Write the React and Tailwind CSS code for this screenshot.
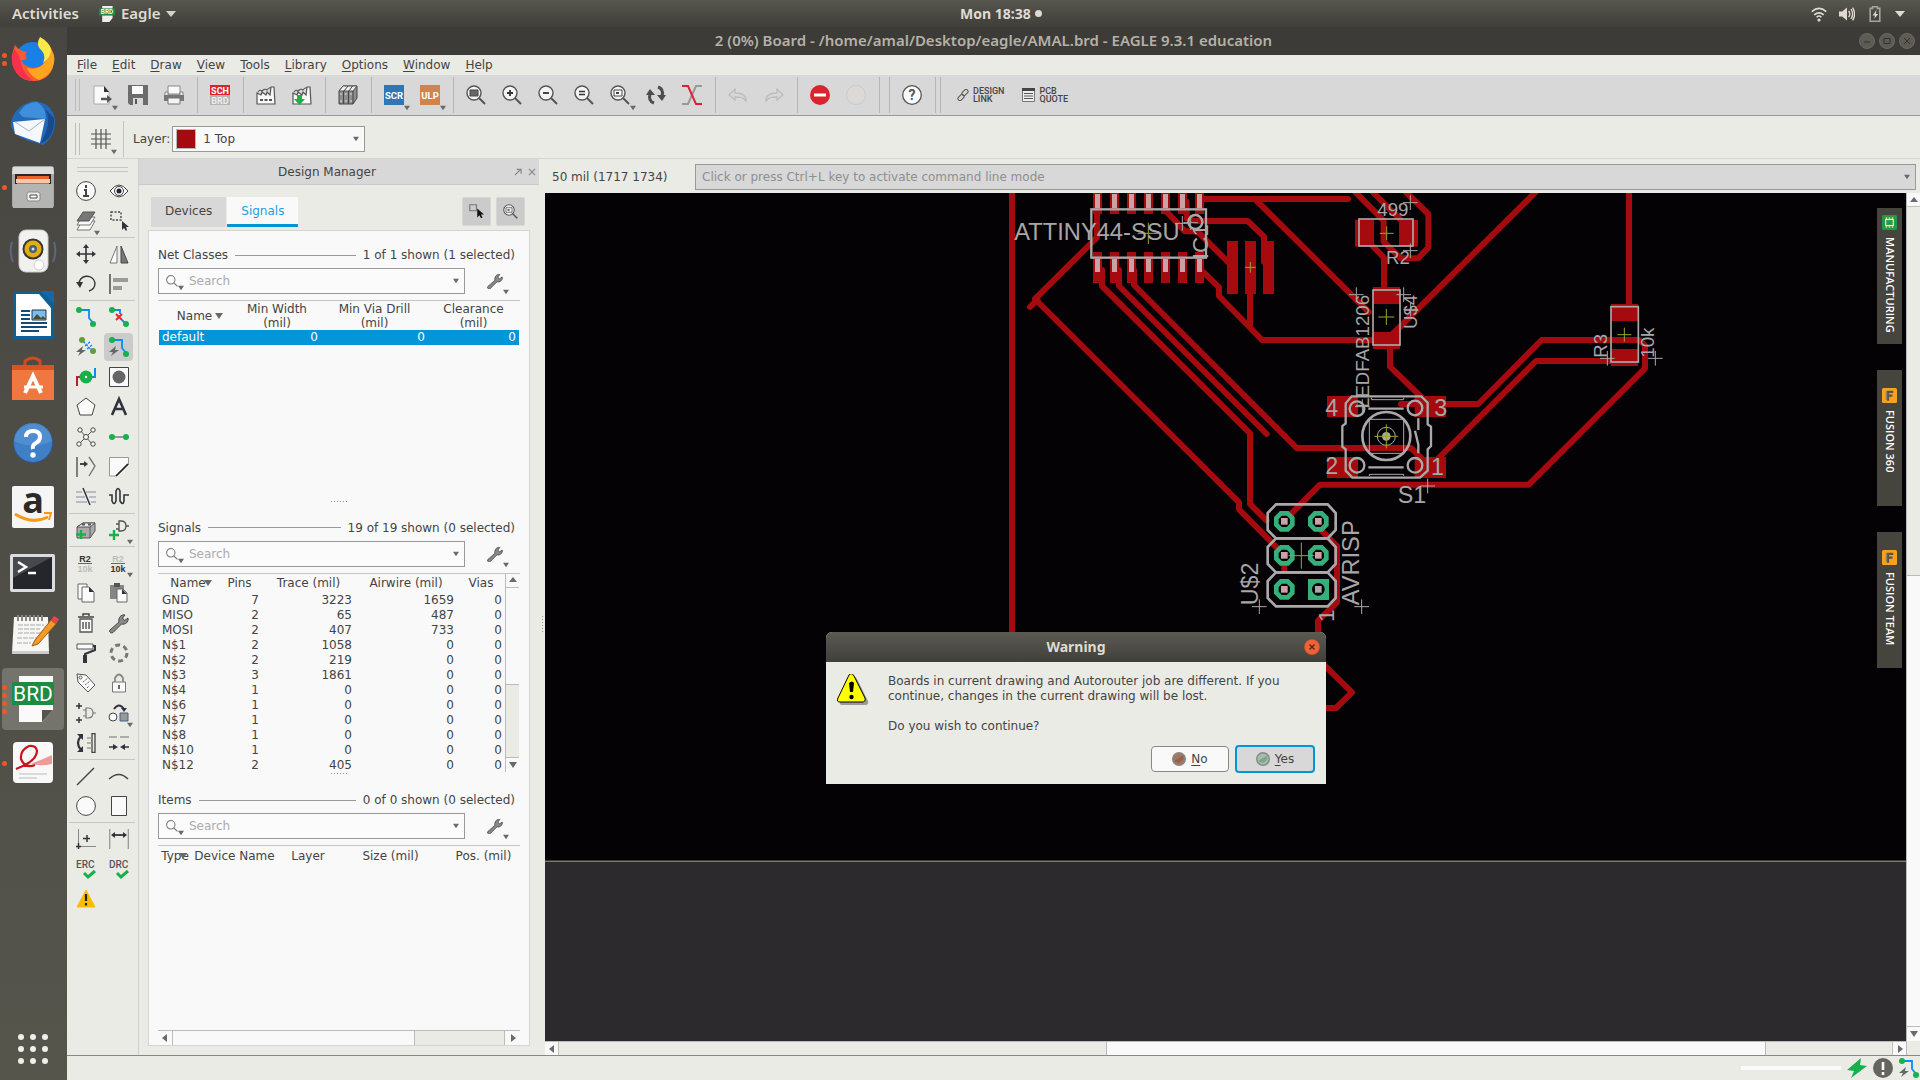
import React, { useState } from 'react'

const dark = '#33333d'
const green = '#17b14b'
const blue = '#0a8cf0'

const Svg = ({ size = 20, box = 20, children, className = '' }) => (
  <svg width={size} height={size} viewBox={`0 0 ${box} ${box}`} fill="none" className={className} aria-hidden="true">
    {children}
  </svg>
)

const Caret = ({ dir = 'down', size = 6, className = '' }) => {
  const shapes = { down: '0,1 8,1 4,7', up: '0,6 8,6 4,1', left: '6,0 6,8 1,4', right: '2,0 2,8 7,4' }
  return (
    <svg width={size} height={size} viewBox="0 0 8 8" className={className} aria-hidden="true">
      <polygon points={shapes[dir]} fill="#6a6a6a" />
    </svg>
  )
}

const Lens = ({ children }) => (
  <>
    <circle cx="8" cy="8" r="7" fill="#f4f4f4" stroke="#555" strokeWidth="1.4" />
    <path d="M13 13l6 6" stroke="#555" strokeWidth="2" />
    {children}
  </>
)

const Wrench = () => (
  <path
    d="M1 17 L10 9 C9 5 12 1 16 2 L13.500 5 L15.500 7.500 L19 5 C20 9 16 12 12.500 11 L4 19.500 C2 21 -0.500 18.500 1 17 Z"
    fill="#8a8a8a" stroke="#444" strokeWidth="1"
  />
)

const Factory = ({ children }) => (
  <>
    <path d="M1 19V8l4 2 1-3 4 3 1-3 3 3 1-8h3l1 17z" fill="#f8f8f8" stroke="#555" strokeWidth="1.200" />
    <path d="M2 7q2-3 4-1q3-3 5-1q2-3 4-2" stroke="#555" strokeWidth="1.100" />
    {children}
  </>
)

const Bolt = ({ x = 0, y = 0 }) => (
  <path transform={`translate(${x} ${y})`} d="M7 0 L0 6 L4 6 L2 10 L10 4 L6 4 Z" fill="#666" />
)

/* top toolbar */
const toolbar = [
  { name: 'Open', menu: true, art: <><path d="M2 1h10l5 6v12H2z" fill="#fafafa" stroke="#aaa" /><path d="M12 1l5 6h-5z" fill={dark} /><path d="M9 14h8" stroke="#555" strokeWidth="2.500" /><path d="M15 10l5 4-5 4z" fill="#555" /></> },
  { name: 'Save', art: <><path d="M0 0h20v20H2l-2-2z" fill="#6c6c6c" /><path d="M4 1h11v8H4z" fill="#fafafa" /><path d="M5 13h10v7H5z" fill="#d8d8d8" /><path d="M7 14h2v5H7z" fill="#555" /></> },
  { name: 'Print', art: <><path d="M4 1h12v8H4z" fill="#fafafa" stroke="#888" /><path d="M1 7h3v3h12V7h3v8H1z" fill="#eee" stroke="#888" /><path d="M0 10h20v6H0z" fill="#777" /><path d="M4 13h12v6H4z" fill="#f4f4f4" stroke="#777" /></> },
  null,
  { name: 'Switch to schematic', art: <><path d="M0 0h20v10H0z" fill="#d9232e" /><path d="M0 10h20v10H0z" fill="#b5b5b5" /><text x="10" y="9" textAnchor="middle" fontSize="9" fontWeight="700" fontFamily="Roboto" fill="#fff">SCH</text><text x="10" y="19" textAnchor="middle" fontSize="9" fontWeight="700" fontFamily="Roboto" fill="#eee">BRD</text></> },
  null,
  { name: 'Manufacture', art: <Factory><path d="M4 15h12" stroke="#555" strokeWidth="2" strokeDasharray="3 1.500" /></Factory> },
  { name: 'CAM processor', art: <Factory><path d="M5 10h5v4h3l-5.500 6L2 14h3z" fill={green} /></Factory> },
  null,
  { name: 'Library', art: <><path d="M1 6l4-5h14v12l-4 6H1z" fill="#8d8d8d" stroke="#444" /><path d="M1 6l4-5h14l-4 5z" fill="#f0f0f0" stroke="#555" /><path d="M5.500 6v13M10.500 6v13M15 6v13M10 1L6 6M14.500 1L11 6" stroke="#444" /><path d="M2 9h2M7 9h2M12 9h2M2 16h2M7 16h2M12 16h2" stroke="#ddd" /></> },
  null,
  { name: 'Script', menu: true, art: <><path d="M0 0h20v20H0z" fill="#2f76b5" /><text x="10" y="14" textAnchor="middle" fontSize="9.500" fontWeight="700" fontFamily="Roboto" fill="#fff">SCR</text></> },
  { name: 'ULP', menu: true, art: <><path d="M0 0h20v20H0z" fill="#d0834a" /><text x="10" y="14" textAnchor="middle" fontSize="9.500" fontWeight="700" fontFamily="Roboto" fill="#fff">ULP</text></> },
  null,
  { name: 'Zoom to fit', art: <Lens><path d="M4 5h8v6H4z" fill="#666" stroke="#444" /></Lens> },
  { name: 'Zoom in', art: <Lens><path d="M8 5v6M5 8h6" stroke="#333" strokeWidth="1.800" /></Lens> },
  { name: 'Zoom out', art: <Lens><path d="M5 8h6" stroke="#333" strokeWidth="1.800" /></Lens> },
  { name: 'Redraw', art: <Lens><path d="M5 6.500h6M5 9.500h6" stroke="#333" strokeWidth="1.500" /></Lens> },
  { name: 'Zoom select', menu: true, art: <Lens><path d="M4 5h8v6H4z" fill="#fff" stroke="#444" /><path d="M6 7h3v2H6z" fill="#444" /></Lens> },
  { name: 'Refresh', art: <><path d="M8 18Q2 16 4 9M12 2q6 2 4 9" stroke="#4c4c4c" strokeWidth="3" /><path d="M0 10h9L4 4zM11 10h9l-4 6z" fill="#4c4c4c" /></> },
  { name: 'Swap layers', art: <><path d="M20 1h-6L6 19H0" stroke="#999" strokeWidth="2" /><path d="M0 1h6l8 18h6" stroke="#d9232e" strokeWidth="2" /></> },
  null,
  { name: 'Undo', art: <path d="M7 4L1 10l6 5v-3c5 0 8 0 11 4 0-6-4-8-11-8z" stroke="#bdbdbd" strokeWidth="1.300" /> },
  { name: 'Redo', art: <path d="M13 4l6 6-6 5v-3C8 12 5 12 2 16c0-6 4-8 11-8z" stroke="#bdbdbd" strokeWidth="1.300" /> },
  null,
  { name: 'Stop', art: <><circle cx="10" cy="10" r="10" fill="#d9232e" /><path d="M4 10h12" stroke="#fff" strokeWidth="3" /></> },
  { name: 'Go', art: <><circle cx="10" cy="10" r="9.500" fill="#dadada" stroke="#c9c9c9" /><path d="M6 7h2l3 6h3M14 7h-2l-3 6H6" stroke="#ead6c4" /></> },
  null,
  null,
  { name: 'Help', art: <><circle cx="10" cy="10" r="9.300" fill="#fafafa" stroke="#555" strokeWidth="1.300" /><text x="10" y="15" textAnchor="middle" fontSize="14" fontWeight="700" fontFamily="Roboto" fill="#555">?</text></> },
]

/* drawing palette, in pairs; null is a rule between groups */
const palette = [
  ['Info', <><circle cx="10" cy="10" r="9.400" fill="#fafafa" stroke="#444" /><path d="M10 4v3M8 9h2v6M7 15h6" stroke="#444" strokeWidth="2" /></>,
    'Show', <><path d="M1 10q9-12 18 0q-9 12-18 0z" fill="#fafafa" stroke="#444" /><circle cx="10" cy="10" r="4.500" stroke="#444" /><circle cx="10" cy="10" r="2.500" fill="#222233" /></>],
  ['Layer settings', <><path d="M6 10h13l-5 9H1z" fill="#fafafa" stroke="#777" /><path d="M6 6h13l-5 8H1z" fill="#fafafa" stroke="#777" /><path d="M7 1h12l-6 9H1z" fill="#777" stroke="#555" /></>,
    'Group', <><path d="M2 1h10v8H2z" stroke="#444" strokeWidth="1.400" strokeDasharray="2 1.500" /><path d="M13 10v9l2-2 2 3 1-1-1-3h3z" fill={dark} /></>, 'menu'],
  null,
  ['Move', <><path d="M10 3v14M3 10h14" stroke={dark} strokeWidth="1.600" /><path d="M10 0l3 4H7zM10 20l3-4H7zM0 10l4-3v6zM20 10l-4-3v6z" fill={dark} /></>,
    'Mirror', <><path d="M8 2v17H1z" fill="#fafafa" stroke="#777" /><path d="M12 2v17h7z" fill="#777" stroke="#444" /></>],
  ['Rotate', <><path d="M3 10a8 7.500 0 1 1 10 7" stroke="#333" strokeWidth="1.400" /><path d="M0 8h7l-3 6z" fill={dark} /></>,
    'Align', <><path d="M1 0v20" stroke="#333" strokeWidth="1.300" /><path d="M4 4h15v4H4zM4 12h9v4H4z" fill="#9a9a9a" /></>],
  null,
  ['Route', <><path d="M3 3h10v8l5 6" stroke={blue} strokeWidth="1.800" /><circle cx="3" cy="3" r="3" fill={green} /><circle cx="17" cy="17" r="3" fill={green} /></>,
    'Ripup', <><path d="M3 3h8v4M13 13l4 4" stroke={blue} strokeWidth="1.800" /><circle cx="3" cy="3" r="3" fill={green} /><circle cx="17" cy="17" r="3" fill={green} /><path d="M7 7l6 6M13 7l-6 6" stroke="#e8262d" strokeWidth="2" /></>],
  ['Fanout', <><path d="M7 4l10 11M9 9l5-4M11 12l5-4" stroke={blue} strokeWidth="1.300" strokeDasharray="3 1" /><circle cx="6" cy="3" r="3" fill="#6a9a40" /><circle cx="17" cy="14" r="3" fill="#6a9a40" /><Bolt x={0} y={9} /></>,
    'Autorouter', <><path d="M3 3h10v8l5 6" stroke={blue} strokeWidth="1.800" /><circle cx="3" cy="3" r="3" fill={green} /><circle cx="17" cy="17" r="3" fill={green} /><Bolt x={0} y={9} /></>],
  ['Via', <><path d="M1 19v-9h4" stroke="#b3242a" strokeWidth="2" /><path d="M19 1v9h-4" stroke={blue} strokeWidth="2" /><circle cx="10" cy="10" r="6.500" fill={green} /><circle cx="10" cy="10" r="1.200" fill="#fff" /></>,
    'Hole', <><path d="M.5.5h19v19H.5z" fill="#fafafa" stroke="#444" /><circle cx="10" cy="10" r="6.500" fill="#666" /></>],
  ['Polygon', <path d="M10 1l9 7-3 10H4L1 8z" fill="#fafafa" stroke="#444" />,
    'Text', <path d="M3 18l7-16 7 16M6 12h8" stroke={dark} strokeWidth="2.600" />],
  ['Ratsnest', <><path d="M4 3l12 14M17 3L3 17" stroke="#555" /><circle cx="4" cy="3" r="2.200" fill="#fafafa" stroke="#444" /><circle cx="17" cy="3" r="2.200" fill="#fafafa" stroke="#444" /><circle cx="10" cy="10" r="2.500" fill="#fafafa" stroke="#444" /><circle cx="3" cy="17" r="2.200" fill="#fafafa" stroke="#444" /><circle cx="17" cy="17" r="2.200" fill="#fafafa" stroke="#444" /></>,
    'Signal', <><path d="M3 10h14" stroke="#999" strokeWidth="2" /><circle cx="3" cy="10" r="3" fill={green} /><circle cx="17" cy="10" r="3" fill={green} /></>],
  ['Split', <><path d="M1 0v20" stroke="#444" strokeWidth="1.300" /><path d="M13 0l6 9-6 10" stroke="#777" strokeWidth="1.400" /><path d="M4 7h5" stroke={dark} strokeWidth="1.800" /><path d="M8 4l4 3-4 3z" fill={dark} /></>,
    'Miter', <><path d="M.5.5h19v7L7 19H.5z" fill="#fafafa" stroke="#999" /><path d="M19 7L7 19" stroke="#222" strokeWidth="1.700" /></>],
  ['Slice', <><path d="M0 5h6M10 5h10M0 10h9M13 10h7M0 15h11M15 15h5" stroke="#a9a9bd" strokeWidth="1.400" /><path d="M7 1l7 17" stroke={dark} strokeWidth="1.500" /></>,
    'Meander', <path d="M0 8h3v6q2 5 4 0V4q2-5 4 0v10q3 5 4 0V8h5" stroke={dark} strokeWidth="1.600" />],
  null,
  ['Replace', <><path d="M1 7l6-4h12v8l-5 7H1z" fill="#aaa" stroke="#555" /><path d="M1 7l6-4h12l-5 4z" fill="#eee" stroke="#555" /><path d="M6 4.500h3M12 4.500h3" stroke="#555" strokeWidth="2" /><path d="M14 7v11" stroke="#555" /><path d="M5 10v9M0 14.500h10" stroke={green} strokeWidth="2.400" /></>,
    'Add part', <><path d="M10 1h2q5 0 5 5t-5 5h-2zM7 4h3M7 9h3M17 6h3" stroke="#555" strokeWidth="1.400" /><path d="M5 10v10M0 15h10" stroke={green} strokeWidth="2.400" /></>, 'menu'],
  null,
  ['Name', <><text x="9" y="9" textAnchor="middle" fontSize="9" fontWeight="700" fontFamily="Liberation Sans" fill="#333">R2</text><path d="M2 10.500h14" stroke="#666" /><text x="9" y="19" textAnchor="middle" fontSize="9" fontWeight="700" fontFamily="Liberation Sans" fill="#bbb">10k</text></>,
    'Value', <><text x="9" y="9" textAnchor="middle" fontSize="9" fontWeight="700" fontFamily="Liberation Sans" fill="#bbb">R2</text><path d="M2 10.500h14" stroke="#666" /><text x="9" y="19" textAnchor="middle" fontSize="9" fontWeight="700" fontFamily="Liberation Sans" fill="#333">10k</text></>, 'menu'],
  ['Copy', <><path d="M2 1h9v15H2z" fill="#fafafa" stroke="#666" /><path d="M6 4h7l5 5v10H6z" fill="#fafafa" stroke="#666" /><path d="M13 4l5 5h-5z" fill={dark} /></>,
    'Paste', <><path d="M1 2h14v14H1z" fill="#858585" /><path d="M5 0h6v4H5z" fill="#555" /><path d="M8 6h6l4 4v9H8z" fill="#fafafa" stroke="#666" /><path d="M13 6l5 5h-5z" fill={dark} /></>],
  ['Delete', <><path d="M4 6h12v13H4z" fill="#fafafa" stroke="#555" strokeWidth="1.300" /><path d="M2 4h16M7 3V1h6v2" stroke="#444" strokeWidth="1.500" /><path d="M7 9v7M10 9v7M13 9v7" stroke="#444" strokeWidth="1.300" /></>,
    'Change', <Wrench />],
  ['Paint roller', <><path d="M1 1h16v5H1z" fill="#fafafa" stroke="#555" /><path d="M17 3h2v4L9 11v3" stroke={dark} strokeWidth="2" /><path d="M9 12v8" stroke={dark} strokeWidth="4" /></>,
    'Optimize', <circle cx="10" cy="10" r="8" stroke="#777" strokeWidth="3" strokeDasharray="5 3.400" />],
  ['Tag', <><path d="M1 1l9 1 9 10-7 7L2 9z" fill="#fafafa" stroke="#555" /><circle cx="4.500" cy="4.500" r="1.500" stroke="#555" /><path d="M7 9l5-4M9 12l5-4M11 15l2-2" stroke="#666" strokeDasharray="2 1" /></>,
    'Lock', <><path d="M6 9V5q4-7 8 0v4" stroke="#888" strokeWidth="1.800" /><path d="M3.500 9h13v10h-13z" fill="#fafafa" stroke="#777" /><path d="M10 12v4" stroke="#444" strokeWidth="1.600" /></>],
  ['Invoke', <><path d="M3 0v6M0 3h6M3 14v6M0 17h6" stroke={dark} strokeWidth="1.500" /><path d="M10 5h2q5 0 5 5t-5 5h-2zM7 7h3M7 13h3M17 10h3" stroke="#777" strokeWidth="1.200" /></>,
    'Pin swap', <><path d="M5 6q5-7 10 0" stroke={dark} strokeWidth="2" /><path d="M12 5h6l-3 4z" fill={dark} /><circle cx="4" cy="14" r="4" fill="#fafafa" stroke="#444" /><path d="M11 10h8v8h-8z" fill="#999" stroke="#4a5f86" /></>, 'menu'],
  ['Pin array', <><path d="M5 3q-6 7 0 14" stroke={dark} strokeWidth="2.200" /><path d="M1 1h6v6zM1 19h6v-6z" fill={dark} /><path d="M16 0v20M16 .7h3v18.600h-3" stroke="#444" strokeWidth="1.300" /><path d="M11 5h5M11 10h5M11 15h5" stroke="#999" strokeWidth="1.600" /></>,
    'Gate swap', <><path d="M0 4h8M11 4h9" stroke="#999" strokeWidth="1.500" /><path d="M0 14h5M20 14h-5" stroke={dark} strokeWidth="1.500" /><path d="M4 11l5 3-5 3zM16 11l-5 3 5 3z" fill={dark} /></>],
  null,
  ['Line', <path d="M1 19L18 2" stroke="#444" strokeWidth="1.400" />,
    'Arc', <path d="M0 13q10-9 19 0" stroke="#444" strokeWidth="1.500" />],
  ['Circle', <circle cx="10" cy="10" r="9.400" fill="#fafafa" stroke="#444" />,
    'Rectangle', <path d="M2.500.5h15v19h-15z" fill="#fafafa" stroke="#444" />],
  null,
  ['Mark', <><path d="M2.500 0v20M0 17.500h20" stroke="#888" /><path d="M11 6v7M7 9.500h7M2.500 14v6M0 17.500h5" stroke={dark} strokeWidth="1.500" /></>,
    'Dimension', <><path d="M.7 0v20M19.300 0v20" stroke="#999" strokeWidth="1.300" /><path d="M3 6h14" stroke={dark} strokeWidth="1.800" /><path d="M2 6l4-3v6zM18 6l-4-3v6z" fill={dark} /></>],
  ['ERC', <><text x="0" y="9" fontSize="10" fontFamily="Roboto" fontWeight="500" fill="#555">ERC</text><path d="M8 14l4 4 7-6" stroke={green} strokeWidth="3" /></>,
    'DRC', <><text x="0" y="9" fontSize="10" fontFamily="Roboto" fontWeight="500" fill="#555">DRC</text><path d="M8 14l4 4 7-6" stroke={green} strokeWidth="3" /></>],
  ['Errors', <><path d="M10 1l9 17H1z" fill="#fbbc05" stroke="#fbbc05" strokeLinejoin="round" /><path d="M10 5v7M10 14v2.500" stroke="#222" strokeWidth="2.200" /></>],
]

/* launcher, viewBox 44 */
const dock = [
  { name: 'Firefox', dots: 2, art: <><circle cx="22" cy="23" r="18" fill="#1a7fe6" /><path d="M4 8q-4 11-3 16q3 19 21 20q19 0 21-20q1-8-5-16q3 11-4 17q-7 8-16 5q-6-2-8-7q4 1 6-2q-3-3 0-6q-8-1-12-7z" fill="#ff5a2e" /><path d="M16 31q12 3 18-6q6-6 4-16q7 9 5 17q-2 12-15 17q-8-3-12-12z" fill="#ffa51e" /><path d="M3 12q-4 12 0 20q6 11 19 12q-10-8-12-18q-1-8-7-14z" fill="#f5314e" /><path d="M29 0q-5 8 2 14q4 5 1 12q8-5 8-14q-2-7-11-12z" fill="#ffe84a" /></> },
  { name: 'Thunderbird', dots: 0, art: <><path d="M22 0q20 1 22 20q0 16-12 24l-10-3Q2 36 0 24Q1 6 22 0z" fill="#2468b8" /><path d="M8 12q6-11 18-11q9 5 9 17L12 16z" fill="#3f8fdd" /><path d="M2 21l32-3-5 24L4 33z" fill="#f4f7fb" /><path d="M4 21l14 9 16-12" stroke="#aab4c0" /><path d="M34 8q8 14-5 35q15-6 14-26z" fill="#174b8e" /></> },
  { name: 'Files', dots: 1, art: <><rect x="1" y="1" width="42" height="42" rx="3" fill="#a7a7a4" /><path d="M2 2h40l1 7H1z" fill="#ddd" /><path d="M4 9h36v10H4z" fill="#2b2622" /><path d="M6 11h32v8H6z" fill="#e8622a" /><path d="M5 14h34v4H5z" fill="#f6c9a6" /><path d="M2 19h40v24H2z" fill="#b4b4b2" /><rect x="16" y="27" width="13" height="9" rx="2" fill="#eee" stroke="#888" /><path d="M19 30h7v3h-7z" fill="#fff" stroke="#444" /></> },
  { name: 'Rhythmbox', dots: 0, art: <><path d="M1 13q-3 10 1 20M43 13q3 10-1 20" stroke="#5a6784" strokeWidth="2" /><rect x="8" y="1" width="29" height="42" rx="7" fill="#f1f1ef" stroke="#ccc" /><circle cx="22" cy="20" r="10.500" fill="#3a3630" /><circle cx="22" cy="20" r="8.500" fill="#e0b010" /><circle cx="22" cy="20" r="4" fill="#4c5f78" /><circle cx="22" cy="20" r="1.500" fill="#ddd" /><circle cx="28" cy="36" r="5" fill="#fff" stroke="#ccc" /></> },
  { name: 'LibreOffice Writer', dots: 0, art: <><path d="M2-2h28l13 12v36H2z" fill="#0f5f97" /><path d="M5 1h23l12 14v28H5z" fill="#fff" /><path d="M30-2h13v13z" fill="#1268a8" /><path d="M10 18h9M10 22h9M10 26h9M10 30h26M10 34h26M10 38h18" stroke="#0f4c78" strokeWidth="1.800" /><path d="M21 17h14v10H21z" fill="#78c0e8" stroke="#235" /><path d="M22 26l4-5 4 4 2-2 3 3z" fill="#4d4a30" /></> },
  { name: 'Ubuntu Software', dots: 0, art: <><path d="M14 10V4q8-6 15 0v6" stroke="#d04a20" strokeWidth="3" /><path d="M1 8h42v35H1z" fill="#ef7840" /><path d="M1 8h42v5H1z" fill="#d9541e" /><path d="M14 36l8-17 8 17" stroke="#fff" strokeWidth="4" /><path d="M13 30h19" stroke="#fff" strokeWidth="3" /></> },
  { name: 'Help', dots: 0, art: <><circle cx="22" cy="22" r="19.500" fill="#3f7fc6" stroke="#2a5a98" /><path d="M3 20a19 18 0 0 1 38 0q-19 9-38 0z" fill="#5b97d8" opacity=".6" /><path d="M15 16q0-6 7-6t7 6q0 4-4 6t-3 6" stroke="#fff" strokeWidth="4" /><circle cx="22" cy="34" r="2.700" fill="#fff" /></> },
  { name: 'Amazon', dots: 0, art: <><rect x="1" y="1" width="42" height="42" rx="2" fill="#f5f5f5" /><text x="22" y="28" textAnchor="middle" fontSize="36" fontWeight="700" fontFamily="Open Sans" fill="#2a2a2a">a</text><path d="M4 29q17 11 33 3" stroke="#f79a1c" strokeWidth="3" /><path d="M33 28h7l-2 7" stroke="#f79a1c" strokeWidth="2" /></> },
  { name: 'Terminal', dots: 0, art: <><rect x="-1" y="5" width="45" height="38" rx="2" fill="#dcdcdc" /><path d="M2 8h39v32H2z" fill="#25262c" /><path d="M2 8h39L2 29z" fill="#46494e" /><path d="M7 13l8 5-8 5" stroke="#fff" strokeWidth="2.500" /><path d="M17 24h8" stroke="#fff" strokeWidth="2.500" /></> },
  { name: 'Text Editor', dots: 0, art: <><path d="M3 4h34l1 36H1z" fill="#f6f6f4" /><path d="M1 38h37v3H1z" fill="#ccc" /><path d="M6 5h28" stroke="#888" strokeWidth="6" strokeDasharray="2 2" /><path d="M7 12h26M7 16h22M7 20h26M6 25h20M6 30h14" stroke="#aaa" strokeDasharray="5 1" /><path d="M24 27L40 7l5 4-18 20-6 2z" fill="#f39a2a" stroke="#a35a10" /><path d="M40 7l3-4 5 3-3 5z" fill="#e24a4a" /></> },
  { name: 'Eagle', dots: 4, active: true, art: <><path d="M8-1h34v34L31 45H8z" fill="#fafafa" /><path d="M31 45V33h11z" fill="#55554f" /><path d="M1 5h42v23H1z" fill="#1d8b41" /><text x="22" y="24" textAnchor="middle" fontSize="21" fontFamily="Roboto" fill="#fff">BRD</text></> },
  { name: 'Document Viewer', dots: 1, art: <><rect x="2" y="1" width="40" height="41" rx="4" fill="#f8f8f8" /><path d="M5 27q17-4 36-13v9q-14 3-22-1q-7 3-14 5z" fill="#ee9a98" /><path d="M5 28Q26 20 26 10Q25 4 18 5Q9 9 10 18q4 10 14 6" stroke="#c8141e" strokeWidth="2.200" /><path d="M8 33h28M8 37h18" stroke="#bbb" /></> },
]

function Dock() {
  return (
    <nav className="w-[67px] shrink-0 flex flex-col bg-linear-to-b from-[#484641] to-[#56554c]">
      {dock.map(app => (
        <button key={app.name} aria-label={app.name} className="relative h-16 pr-px flex items-center justify-center">
          {app.active && <span className="absolute left-[2px] right-[3px] inset-y-px rounded bg-[#74736c]" />}
          <span className="absolute left-[2px] inset-y-0 flex flex-col justify-center gap-[3px]">
            {Array.from({ length: app.dots }, (_, i) => (
              <span key={i} className="w-[5px] h-[5px] rounded-full bg-[#ef5824]" />
            ))}
          </span>
          <Svg size={44} box={44} className="relative overflow-visible">{app.art}</Svg>
        </button>
      ))}
      <button aria-label="Show Applications" className="mt-auto mb-4 mx-auto pr-px grid grid-cols-3 gap-[6px]">
        {Array.from({ length: 9 }, (_, i) => <span key={i} className="w-[6px] h-[6px] rounded-full bg-[#efefec]" />)}
      </button>
    </nav>
  )
}

function TopBar() {
  return (
    <header className="h-[27px] shrink-0 flex items-center text-[14px] font-bold text-[#dfdbd2] font-['Noto_Sans',sans-serif] bg-linear-to-b from-[#575750] via-[#4b4943] to-[#403f3a]">
      <div className="w-1/2 flex items-center pl-3">
        <button className="text-[15px] font-semibold">Activities</button>
        <button className="flex items-center ml-5 text-[15px] font-semibold">
          <Svg size={16} className="mr-[6px]"><path d="M4 0h13v15l-4 5H4z" fill="#eee" /><path d="M0 3h20v9H0z" fill="#1d8b41" /><text x="10" y="10.500" textAnchor="middle" fontSize="8" fontFamily="Roboto" fill="#fff">BRD</text></Svg>
          Eagle
          <svg width="10" height="6" viewBox="0 0 10 6" className="ml-[6px]"><path d="M0 0h10L5 6z" fill="#d5d2ca" /></svg>
        </button>
      </div>
      <button className="flex items-center gap-1">
        Mon 18:38 <span className="w-[7px] h-[7px] rounded-full bg-[#dfdbd2]" />
      </button>
      <div className="ml-auto mr-[15px] flex items-center gap-3">
        <Svg size={16}><path d="M1 7q9-8 18 0M4 11q6-5 12 0M7 14q3-3 6 0" stroke="#dfdbd2" strokeWidth="2" /><circle cx="10" cy="17.500" r="2" fill="#dfdbd2" /></Svg>
        <Svg size={16}><path d="M0 7h4l6-5v16l-6-5H0z" fill="#dfdbd2" /><path d="M12 6q3 4 0 8M15 4q4 6 0 12M17 2q5 8 0 16" stroke="#dfdbd2" strokeWidth="1.700" /></Svg>
        <Svg size={16}><path d="M4 3h3V1h6v2h3v16H4z" stroke="#a7a49c" strokeWidth="2" /><path d="M12 5l-5 7h3l-1 4 5-6h-3z" fill="#dfdbd2" /></Svg>
        <svg width="10" height="6" viewBox="0 0 10 6"><path d="M0 0h10L5 6z" fill="#dfdbd2" /></svg>
      </div>
    </header>
  )
}

const winButtons = [['Minimize', 'M5 9h6'], ['Maximize', 'M5 5.500h6v5H5z'], ['Close', 'M5 5l6 6M11 5l-6 6']]

function TitleBar() {
  return (
    <div className="h-7 shrink-0 relative flex items-center justify-center bg-[#3c3b37] text-[#b5b1a8] text-[15px] font-semibold font-['Noto_Sans',sans-serif]">
      <h1 className="leading-[26px] pb-[2px]">2 (0%) Board - /home/amal/Desktop/eagle/AMAL.brd - EAGLE 9.3.1 education</h1>
      <div className="absolute right-[5px] flex gap-1">
        {winButtons.map(([name, d]) => (
          <button key={name} aria-label={name}>
            <Svg size={16} box={16}><circle cx="8" cy="8" r="7.500" fill="#5d5b54" stroke="#6b6962" /><path d={d} stroke="#33322e" /></Svg>
          </button>
        ))}
      </div>
    </div>
  )
}

const Handle = () => <span className="w-[5px] h-8 border-x border-[#bdbdbd]" />

const Rule = () => <span className="w-[10px] flex justify-center"><span className="w-px h-9 bg-[#b5b5b5]" /></span>

function ToolBars() {
  const [layer, setLayer] = useState('1 Top')
  return (
    <>
      <nav className="h-5 shrink-0 flex items-center gap-px pl-[3px]">
        {['File', 'Edit', 'Draw', 'View', 'Tools', 'Library', 'Options', 'Window', 'Help'].map(m => (
          <button key={m} className="px-[7px]"><span className="underline underline-offset-2">{m[0]}</span>{m.slice(1)}</button>
        ))}
      </nav>
      <div className="h-[41px] shrink-0 flex items-center pl-2 bg-[#d8d8d8] border-b border-[#999]">
        <Handle />
        <span className="w-1" />
        {toolbar.map((t, i) => t === null ? <Rule key={i} /> : (
          <button key={t.name} aria-label={t.name} className="relative w-9 h-9 flex items-center justify-center">
            <Svg>{t.art}</Svg>
            {t.menu && <Caret className="absolute right-[2px] bottom-[2px]" />}
          </button>
        ))}
        <Rule />
        <span className="w-px h-9 bg-[#b5b5b5]" />
        <div className="flex items-center gap-[18px] pl-4 font-['Roboto',sans-serif] text-[9px] leading-[8px] font-medium text-[#444]">
          <button className="flex items-center gap-1">
            <svg width="12" height="12" viewBox="0 0 12 12" fill="none" stroke="#555"><rect x="6" y="0" width="4" height="7" rx="2" transform="rotate(45 8 3.500)" /><rect x="2" y="5" width="4" height="7" rx="2" transform="rotate(45 4 8.500)" /></svg>
            <span className="text-left">DESIGN<br />LINK</span>
          </button>
          <button className="flex items-center gap-1">
            <svg width="13" height="14" viewBox="0 0 13 14" fill="none"><path d="M.5.5h12v13H.5z" fill="#eee" stroke="#777" /><path d="M0 0h13v3H0z" fill="#444" /><path d="M2 5.500h9M2 8h9M2 10.500h9" stroke="#555" /></svg>
            <span className="text-left">PCB<br />QUOTE</span>
          </button>
        </div>
      </div>
      <div className="h-[43px] shrink-0 flex items-center pl-2 pt-[3px] border-b border-[#d4d4d4]">
        <Handle />
        <button aria-label="Grid" className="relative w-9 h-9 ml-[3px] flex items-center justify-center">
          <Svg><path d="M5 0v20M10 0v20M15 0v20M0 5h20M0 10h20M0 15h20" stroke="#555" strokeWidth="1.200" /></Svg>
          <Caret className="absolute right-[2px] bottom-[2px]" />
        </button>
        <span className="w-px h-9 ml-1 bg-[#c4c4c4]" />
        <label htmlFor="layer" className="ml-[9px] mr-[2px]">Layer:</label>
        <div className="relative w-[193px] h-[26px]">
          <select id="layer" value={layer} onChange={e => setLayer(e.target.value)} className="appearance-none w-full h-full pl-[30px] bg-[#f9f9f9] border border-[#999]">
            <option>1 Top</option>
            <option>16 Bottom</option>
          </select>
          <span className="absolute left-1 top-[3px] w-5 h-5 bg-[#a50a0e] border border-[#b8b8b8] pointer-events-none" />
          <Caret className="absolute right-[6px] top-[10px] pointer-events-none" />
        </div>
      </div>
    </>
  )
}

function PaletteButton({ name, art, menu }) {
  return (
    <button aria-label={name} className="relative h-[30px] flex items-center justify-center">
      {name === 'Autorouter' && <span className="absolute inset-x-[2px] inset-y-px bg-[#cbcbcb] rounded-sm" />}
      <Svg className="relative overflow-visible">{art}</Svg>
      {menu && <Caret className="absolute right-[2px] bottom-0" />}
    </button>
  )
}

function Palette() {
  return (
    <aside className="w-[72px] shrink-0 border-r border-[#d0d0d0]">
      <div className="h-[17px] pt-2 px-[10px]"><div className="h-[5px] border-y border-[#c6c6c6]" /></div>
      <div className="grid grid-cols-[33px_33px] pl-[2px]">
        {palette.map((row, i) => row === null
          ? <div key={i} className="col-span-2 h-[3px] py-px"><div className="h-px bg-[#c6c6c6]" /></div>
          : (
            <React.Fragment key={i}>
              <PaletteButton name={row[0]} art={row[1]} menu={row[0] === 'Layer settings'} />
              {row[2] && <PaletteButton name={row[2]} art={row[3]} menu={row[4] && row[0] !== 'Layer settings'} />}
            </React.Fragment>
          ))}
      </div>
    </aside>
  )
}

const signals = [
  ['GND', 7, 3223, 1659, 0],
  ['MISO', 2, 65, 487, 0],
  ['MOSI', 2, 407, 733, 0],
  ['N$1', 2, 1058, 0, 0],
  ['N$2', 2, 219, 0, 0],
  ['N$3', 3, 1861, 0, 0],
  ['N$4', 1, 0, 0, 0],
  ['N$6', 1, 0, 0, 0],
  ['N$7', 1, 0, 0, 0],
  ['N$8', 1, 0, 0, 0],
  ['N$10', 1, 0, 0, 0],
  ['N$12', 2, 405, 0, 0],
]

function Section({ title, count, children }) {
  return (
    <section className="flex-1 basis-0 min-h-0 flex flex-col">
      <div className="h-5 shrink-0 flex items-center pr-[5px]">
        <h3>{title}</h3>
        <span className="flex-1 h-px bg-[#999] mx-[7px]" />
        <span>{count}</span>
      </div>
      <div className="mt-[3px] shrink-0 flex">
        <div className="relative w-[307px] h-[26px]">
          <input aria-label={`Search ${title}`} placeholder="Search" className="w-full h-full pl-[30px] bg-[#fbfbfb] border border-[#999] placeholder-[#aaa]" />
          <Svg size={12} className="absolute left-2 top-[7px]"><circle cx="8" cy="8" r="7" stroke="#777" strokeWidth="1.700" /><path d="M13 13l6 6" stroke="#777" strokeWidth="2" /></Svg>
          <Caret className="absolute left-5 bottom-[3px]" />
          <Caret className="absolute right-[6px] top-[10px]" />
        </div>
        <button aria-label={`${title} options`} className="relative ml-[22px] w-[26px] flex items-center">
          <Svg size={16}><Wrench /></Svg>
          <Caret className="absolute right-1 -bottom-px" />
        </button>
      </div>
      <div className="mt-[6px] flex-1 min-h-0 flex flex-col border-t border-[#c6c6c6] overflow-hidden">{children}</div>
    </section>
  )
}

const Splitter = () => (
  <div className="h-[18px] shrink-0 pt-px flex justify-center gap-[2px]">
    {[0, 1, 2, 3, 4, 5].map(i => <span key={i} className="w-px h-px bg-[#999]" />)}
  </div>
)

function DesignManager() {
  const [tab, setTab] = useState('Signals')
  return (
    <aside className="w-[400px] shrink-0 flex flex-col">
      <div className="relative h-[26px] shrink-0 flex items-center justify-center pr-6 bg-[#d8d8d8] border-b border-[#c9c9c9]">
        <h2>Design Manager</h2>
        <div className="absolute right-[3px] flex gap-[6px]">
          <button aria-label="Float"><Svg size={8} box={9}><path d="M1 8l6-6M3 1.500h5v5" stroke="#888" strokeWidth="1.300" /></Svg></button>
          <button aria-label="Close panel"><Svg size={8} box={9}><path d="M1 1l7 7M8 1L1 8" stroke="#888" strokeWidth="1.300" /></Svg></button>
        </div>
      </div>
      <div className="mt-3 mx-[9px] pl-[3px] pr-[5px] h-[33px] shrink-0 flex gap-px" role="tablist">
        {['Devices', 'Signals'].map(t => (
          <button key={t} role="tab" aria-selected={tab === t} onClick={() => setTab(t)}
            className={`h-[30px] px-[14px] border-b-3 ${tab === t ? 'bg-[#f9f9f9] text-[#1a9fdc] border-[#0096d8]' : 'bg-[#d8d8d8] border-[#d8d8d8]'}`}>
            {t}
          </button>
        ))}
        <div className="ml-auto flex gap-[5px]">
          <button aria-label="Pick" className="w-[29px] h-[29px] flex items-center justify-center bg-[#cbcbcb] border border-[#d6d6d6] rounded-xs">
            <Svg size={15}><path d="M1 1h9v8H1z" stroke="#777" strokeWidth="1.500" /><path d="M11 6v12l3-3 2 4 2-1-2-4h4z" fill="#111" /></Svg>
          </button>
          <button aria-label="Zoom to selection" className="w-[29px] h-[29px] flex items-center justify-center bg-[#cbcbcb] border border-[#d6d6d6] rounded-xs">
            <Svg size={15}><Lens><path d="M4 5h8v6H4z" fill="#fff" stroke="#444" /><path d="M6 7h3v2H6z" fill="#444" /></Lens></Svg>
          </button>
        </div>
      </div>
      <div className="flex-1 min-h-0 mx-[9px] mb-[9px] px-[9px] pt-[14px] flex flex-col bg-[#f9f9f9] border border-[#d4d4d4]">
        <Section title="Net Classes" count="1 of 1 shown (1 selected)">
          <table className="table-fixed w-[360px] mx-px">
            <colgroup><col className="w-[74px]" /><col className="w-[88px]" /><col className="w-[107px]" /><col className="w-[91px]" /></colgroup>
            <thead>
              <tr className="h-[29px] leading-[14px]">
                <th className="font-normal pl-2">Name<Caret size={8} className="inline ml-[3px]" /></th>
                <th className="font-normal">Min Width<br />(mil)</th>
                <th className="font-normal">Min Via Drill<br />(mil)</th>
                <th className="font-normal">Clearance<br />(mil)</th>
              </tr>
            </thead>
            <tbody>
              <tr className="h-[15px] leading-[15px] text-right text-white bg-[#0096d8]">
                <td className="text-left pl-[3px]">default</td>
                <td className="pr-[3px]">0</td>
                <td className="pr-[3px]">0</td>
                <td className="pr-[3px]">0</td>
              </tr>
            </tbody>
          </table>
        </Section>
        <Splitter />
        <Section title="Signals" count="19 of 19 shown (0 selected)">
          <div className="flex flex-1 min-h-0 mx-px">
            <table className="table-fixed w-[346px] self-start">
              <colgroup><col className="w-[58px]" /><col className="w-[45px]" /><col className="w-[93px]" /><col className="w-[102px]" /><col className="w-[48px]" /></colgroup>
              <thead>
                <tr className="h-[19px] leading-[19px]">
                  <th className="font-normal relative">Name<Caret size={8} className="absolute right-[5px] top-[5px]" /></th>
                  {['Pins', 'Trace (mil)', 'Airwire (mil)', 'Vias'].map(h => <th key={h} className="font-normal">{h}</th>)}
                </tr>
              </thead>
              <tbody>
                {signals.map(row => (
                  <tr key={row[0]} className="h-[15px] leading-[15px] text-right">
                    {row.map((v, i) => <td key={i} className={i === 0 ? 'text-left pl-[3px]' : 'pr-[3px]'}>{v}</td>)}
                  </tr>
                ))}
              </tbody>
            </table>
            <div className="w-[14px] flex flex-col border-l border-[#bbb]">
              <button aria-label="Scroll up" className="h-[14px] flex items-center justify-center border-b border-[#c8bcb8]"><Caret dir="up" size={8} /></button>
              <div className="flex-4" />
              <div className="flex-3 bg-[#ebebe6] border-y border-[#bbb]" />
              <button aria-label="Scroll down" className="h-[14px] flex items-center justify-center"><Caret size={8} /></button>
            </div>
          </div>
        </Section>
        <Splitter />
        <Section title="Items" count="0 of 0 shown (0 selected)">
          <table className="table-fixed w-[367px]">
            <colgroup><col className="w-[34px]" /><col className="w-[85px]" /><col className="w-[62px]" /><col className="w-[103px]" /><col className="w-[83px]" /></colgroup>
            <thead>
              <tr className="h-5 whitespace-nowrap">
                <th className="font-normal relative">Type<Caret size={8} className="absolute right-[5px] top-[6px]" /></th>
                {['Device Name', 'Layer', 'Size (mil)', 'Pos. (mil)'].map(h => <th key={h} className="font-normal">{h}</th>)}
              </tr>
            </thead>
          </table>
          <div className="mt-auto h-[15px] flex border-t border-[#bbb]">
            <button aria-label="Scroll left" className="w-[15px] flex items-center justify-center border-r border-[#c8bcb8]"><Caret dir="left" size={8} /></button>
            <div className="flex-1" />
            <div className="w-[91px] bg-[#ebebe6] border-x border-[#bbb]" />
            <button aria-label="Scroll right" className="w-[15px] flex items-center justify-center"><Caret dir="right" size={8} /></button>
          </div>
        </Section>
      </div>
    </aside>
  )
}

/* board drawing: 3 units to a screen pixel */
const tracks = [
  '96,0 96,1460',
  '351,90 351,172 165,357 777,967 777,988 913,1126 913,1170',
  '150,381 172,359',
  '366,270 366,318 810,760 810,972 860,1022',
  '417,270 417,318 860,762',
  '462,270 462,315 950,804 1293,804 1335,845',
  '672,57 1104,57',
  '828,60 1166,396',
  '620,65 620,115 645,123 803,123 852,170 852,245',
  '555,90 615,154 652,154 745,247',
  '672,278 717,322 717,348 846,480 1190,480',
  '810,340 810,440',
  '1120,30 1211,122 1211,185 1262,235 1314,235 1345,203 1345,102 1275,33',
  '1175,33 1260,118',
  '1172,192 1212,233 1212,330',
  '1230,500 1230,560 1325,652',
  '1235,465 1675,28',
  '1263,672 1495,672 1685,480 1978,480 1995,497 1995,565 1646,914 1020,914 913,1022',
  '1920,543 1668,543 1370,840',
  '1947,30 1947,380',
  '1015,1030 1015,1042 1071,1098 1071,1267 1014,1322 1014,1437 1116,1537 1068,1584 1000,1584',
]

const redPads = [
  [741, 183, 33, 159], [795, 183, 33, 159], [849, 183, 33, 159],
  [1125, 120, 57, 80], [1257, 120, 57, 80],
  [1179, 321, 81, 51], [1179, 456, 81, 51],
  [1041, 648, 93, 63], [1304, 648, 94, 63], [1041, 831, 93, 63], [1304, 831, 94, 63],
  [1893, 372, 81, 51], [1893, 507, 81, 51],
]

const labels = [
  ['ATTINY44-SSU', 103, 180, 71], ['499', 1192, 107, 56], ['R2', 1218, 252, 56],
  ['4', 1036, 708, 70], ['3', 1363, 708, 70], ['2', 1036, 882, 70], ['1', 1353, 885, 70], ['S1', 1253, 968, 70],
]

const upLabels = [
  ['IC1', 683, 238, 68], ['LEDFAB1206', 1167, 684, 56], ['U$4', 1310, 447, 56], ['R3', 1882, 533, 56],
  ['10k', 2022, 533, 56], ['U$2', 833, 1276, 70], ['AVRISP', 1138, 1276, 71], ['1', 1063, 1326, 68],
]

const origins = [[1291, 68], [1291, 212], [1129, 344], [1271, 344], [1292, 388], [607, 130], [632, 128], [1147, 680], [1343, 918], [838, 1280], [1145, 1280], [1882, 535], [2026, 535]]
const centres = [[505, 160, 32], [1220, 160, 21], [811, 262, 16], [1219, 411, 24], [1219, 769, 36], [964, 1127, 39], [1933, 464, 21]]
const pins = [352, 403, 454, 505, 556, 607, 658]
const vias = [[913, 1024], [1015, 1024], [913, 1126], [1015, 1126], [913, 1228]]

const cross = (x, y, r) => `M${x - r} ${y}h${2 * r}M${x} ${y - r}v${2 * r}`

function Board() {
  return (
    <svg className="absolute inset-0 w-full h-full" viewBox="-1305 39 4083 2544" preserveAspectRatio="xMinYMin slice" fill="none" fontFamily="'Liberation Sans', sans-serif">
      <rect x="-1305" y="0" width="6000" height="2043" fill="#040205" />
      <path d="M-1305 2043.500h6000" stroke="#aaa39a" strokeWidth="3" />
      <g stroke="#a50a0e" strokeWidth="18" strokeLinecap="round" strokeLinejoin="round">
        {tracks.map(p => <polyline key={p} points={p} />)}
      </g>
      <g fill="#a50a0e">
        {redPads.map(([x, y, w, h]) => <rect key={`${x}-${y}`} x={x} y={y} width={w} height={h} />)}
        {pins.map(x => <path key={x} d={`M${x - 13} 39h27v63h-27zM${x - 13} 216h27v93h-27z`} />)}
      </g>
      <path fill="#cba1a3" d={pins.map(x => `M${x - 7} 42h15v42h-15zM${x - 7} 237h15v39h-15z`).join('')} />

      <g stroke="#34b07b" strokeWidth="14">
        {vias.map(([x, y]) => (
          <React.Fragment key={`${x}-${y}`}>
            <path d={`M${x - 10} ${y - 24}h20l14 14v20l-14 14h-20l-14-14v-20z`} fill="#040205" />
            <rect x={x - 10} y={y - 10} width="20" height="20" fill="#cba1a3" stroke="none" />
          </React.Fragment>
        ))}
        <rect x="984" y="1197" width="63" height="63" fill="#34b07b" stroke="none" />
        <circle cx="1015" cy="1228" r="19" fill="#040205" stroke="none" />
        <rect x="1005" y="1218" width="20" height="20" fill="#a8a8a8" stroke="none" />
      </g>

      <g stroke="#aaa8a8" strokeWidth="7">
        <rect x="334" y="88" width="344" height="145" />
        <circle cx="646" cy="126" r="21" />
        <rect x="1137" y="117" width="162" height="81" strokeWidth="5" />
        <rect x="1179" y="330" width="81" height="165" strokeWidth="5" />
        <rect x="1893" y="380" width="82" height="166" strokeWidth="5" />
        <path d="M1115 649H1324L1343 668V733L1353 740V798L1343 808V872L1320 893H1117L1097 872V808L1087 800V738L1097 730V670Z" />
        {[[1131, 686], [1305, 684], [1131, 856], [1305, 856]].map(([x, y]) => <circle key={`${x}-${y}`} cx={x} cy={y} r="22" />)}
        <circle cx="1219" cy="768" r="72" strokeWidth="8" />
        <path d="M1165 686h106M1165 862h106M1315 715v35M1305 752l10 42v26" />
        <path d="M1168 718h103v102h-103zM1174 653v6h97v-6M1168 888v-5h103v5" strokeWidth="3" />
        <circle cx="1219" cy="769" r="27" strokeWidth="3" />
        <circle cx="1219" cy="769" r="13" fill="#aaa8a8" stroke="none" />
        {[973, 1075, 1177].map(y => (
          <path key={y} d={`M888 ${y}H1043L1067 ${y + 26}V${y + 77}L1043 ${y + 102}H888L863 ${y + 77}V${y + 26}Z`} strokeWidth="8" />
        ))}
      </g>

      <path d={origins.map(([x, y]) => cross(x, y, 22)).join('')} stroke="#aaa8a8" strokeWidth="3" />
      <path d={centres.map(([x, y, r]) => cross(x, y, r)).join('')} stroke="#94a82c" strokeWidth="3" />

      <g fill="#a8a6a6">
        {labels.map(([t, x, y, s]) => <text key={t} x={x} y={y} fontSize={s}>{t}</text>)}
        {upLabels.map(([t, x, y, s]) => <text key={t} transform={`translate(${x} ${y}) rotate(-90)`} fontSize={s}>{t}</text>)}
      </g>
    </svg>
  )
}

const Ball = ({ color, shade }) => (
  <Svg size={14}><circle cx="10" cy="10" r="9" fill={color} stroke="#888" strokeWidth="2" /><path d="M3 13a8 8 0 0 0 13-8z" fill={shade} /></Svg>
)

function WarningDialog({ onClose }) {
  return (
    <div role="dialog" aria-labelledby="warning-title" className="absolute left-[281px] top-[439px] w-[500px] rounded-t-md overflow-hidden bg-[#ebebe6]">
      <div className="relative h-[30px] flex items-center justify-center bg-linear-to-b from-[#5b5a53] to-[#403f3a]">
        <h2 id="warning-title" className="text-[14px] leading-[28px] font-bold text-[#dfdbd2] font-['Noto_Sans',sans-serif]">Warning</h2>
        <button aria-label="Close" onClick={onClose} className="absolute right-[6px]">
          <Svg size={16} box={16}><circle cx="8" cy="8" r="7.700" fill="#ef6236" stroke="#b34a2a" strokeWidth=".6" /><path d="M5.500 5.500l5 5M10.500 5.500l-5 5" stroke="#4a2a1c" strokeWidth="1.300" /></Svg>
        </button>
      </div>
      <div className="flex pt-3 pl-[11px]">
        <svg width="32" height="32" viewBox="0 0 32 32" className="mr-[19px] shrink-0">
          <path d="M15 4q3-3 5 1l11 22q1 4-3 4H5q-3 0-2-3z" fill="#999" />
          <path d="M12 1q3-3 5 1l11 22q1 4-3 4H3q-4 0-2-4z" fill="#ff0" stroke="#000" />
          <path d="M12 9q3-3 5 0l-1 9h-3z" fill="#000" />
          <circle cx="14.500" cy="23" r="2.200" fill="#000" />
        </svg>
        <p className="leading-[15px]">
          Boards in current drawing and Autorouter job are different. If you<br />
          continue, changes in the current drawing will be lost.<br /><br />
          Do you wish to continue?
        </p>
      </div>
      <div className="flex items-center justify-end gap-[6px] pr-[11px] pt-[11px] pb-[11px]">
        <button onClick={onClose} className="w-[78px] h-[26px] flex items-center justify-center gap-[5px] rounded-sm border border-[#888] bg-[#f9f9f9]">
          <Ball color="#a5765e" shade="#8d6450" /><span><u className="underline-offset-2">N</u>o</span>
        </button>
        <button onClick={onClose} className="w-20 h-7 flex items-center justify-center gap-[5px] rounded-sm border-2 border-[#0096d8] bg-[#d8d8d8]">
          <Ball color="#9dbfae" shade="#86a388" /><span><u className="underline-offset-2">Y</u>es</span>
        </button>
      </div>
    </div>
  )
}

const sideTabs = [['MANUFACTURING', 'pt-[7px]'], ['FUSION 360', 'pt-[18px]'], ['FUSION TEAM', 'pt-[18px]']]

function Workspace() {
  const [warn, setWarn] = useState(true)
  return (
    <main className="flex-1 min-w-0 flex flex-col">
      <div className="h-[34px] shrink-0 flex items-center pl-[13px] pr-1 pt-px">
        <span className="w-[143px] shrink-0">50 mil (1717 1734)</span>
        <div className="relative flex-1 h-[26px]">
          <input aria-label="Command line" placeholder="Click or press Ctrl+L key to activate command line mode" className="w-full h-full px-[6px] bg-[#d8d8d8] border border-[#999] placeholder-[#8f8f8f]" />
          <Caret className="absolute right-[6px] top-[10px]" />
        </div>
      </div>
      <div className="flex-1 min-h-0 flex">
        <div className="w-[6px] shrink-0 flex flex-col items-center justify-center gap-[2px]">
          {[0, 1, 2, 3, 4, 5].map(i => <span key={i} className="w-px h-px bg-[#999]" />)}
        </div>
        <div className="flex-1 min-w-0 flex flex-col">
          <div className="relative flex-1 min-h-0 overflow-hidden bg-[#2d2a2e]">
            <Board />
            <div className="absolute right-1 top-[15px] flex flex-col gap-[26px]">
              {sideTabs.map(([name, pad]) => (
                <button key={name} className={`w-[25px] h-[136px] flex flex-col items-center gap-[7px] ${pad} bg-[#45443d] text-white text-[11px] font-semibold font-['Open_Sans',sans-serif]`}>
                  {name === 'MANUFACTURING'
                    ? <Svg size={15} className="shrink-0"><rect width="20" height="20" rx="2" fill="#1f9a4c" /><path d="M6 3v14M10 3v14M14 3v14" stroke="#f2d83a" strokeWidth="2" /><rect x="5" y="6" width="10" height="8" fill="#1f9a4c" stroke="#e8f0d8" strokeWidth="1.500" /></Svg>
                    : <Svg size={15} className="shrink-0"><rect width="20" height="20" rx="2" fill="#f5a31e" /><path d="M15 5H8v12M8 10h6" stroke="#5a5348" strokeWidth="3" /><path d="M6 4v12" stroke="#8f8168" strokeWidth="2" /></Svg>}
                  <span className="[writing-mode:vertical-rl] whitespace-nowrap leading-[14px]">{name}</span>
                </button>
              ))}
            </div>
            {warn && <WarningDialog onClose={() => setWarn(false)} />}
          </div>
          <div className="h-[14px] shrink-0 flex border-t border-[#bbb]">
            <button aria-label="Scroll left" className="w-[14px] flex items-center justify-center bg-[#f9f9f9] border-r border-[#c8bcb8]"><Caret dir="left" size={8} /></button>
            <div className="w-[547px]" />
            <div className="flex-1 bg-[#f9f9f9] border-x border-[#bbb]" />
            <div className="w-[126px]" />
            <button aria-label="Scroll right" className="w-[14px] flex items-center justify-center bg-[#f9f9f9] border-l border-[#c8bcb8]"><Caret dir="right" size={8} /></button>
          </div>
        </div>
        <div className="w-[14px] shrink-0 flex flex-col pb-[14px] border-l border-[#bbb]">
          <button aria-label="Scroll up" className="h-[14px] flex items-center justify-center bg-[#f9f9f9] border-b border-[#c8bcb8]"><Caret dir="up" size={8} /></button>
          <div className="flex-9" />
          <div className="flex-11 bg-[#f9f9f9] border-y border-[#bbb]" />
          <button aria-label="Scroll down" className="h-[14px] flex items-center justify-center bg-[#f9f9f9]"><Caret size={8} /></button>
        </div>
      </div>
    </main>
  )
}

function StatusBar() {
  return (
    <footer className="h-[25px] shrink-0 flex items-center justify-end border-t border-[#888]">
      <div className="w-[100px] h-1 mr-[6px] bg-[#fafafa]" />
      <div className="flex gap-[6px] pr-px">
        <Svg><path d="M14 0L0 12l7 1-3 7L20 8l-7-1z" fill={green} /></Svg>
        <Svg><circle cx="10" cy="10" r="10" fill="#666460" /><path d="M10 4v8M10 14v3" stroke="#fafafa" strokeWidth="2.600" /></Svg>
        <Svg><path d="M3 3h10v8l5 6" stroke={blue} strokeWidth="1.800" /><circle cx="3" cy="3" r="3" fill={green} /><circle cx="17" cy="17" r="3" fill={green} /><Bolt x={0} y={9} /></Svg>
      </div>
    </footer>
  )
}

export default function App() {
  return (
    <div className="h-screen flex flex-col overflow-hidden bg-[#ebebe6] text-[12px] text-[#444] font-['DejaVu_Sans',sans-serif]">
      <TopBar />
      <div className="flex-1 min-h-0 flex">
        <Dock />
        <div className="flex-1 min-w-0 flex flex-col">
          <TitleBar />
          <ToolBars />
          <div className="flex-1 min-h-0 flex">
            <Palette />
            <DesignManager />
            <Workspace />
          </div>
          <StatusBar />
        </div>
      </div>
    </div>
  )
}
